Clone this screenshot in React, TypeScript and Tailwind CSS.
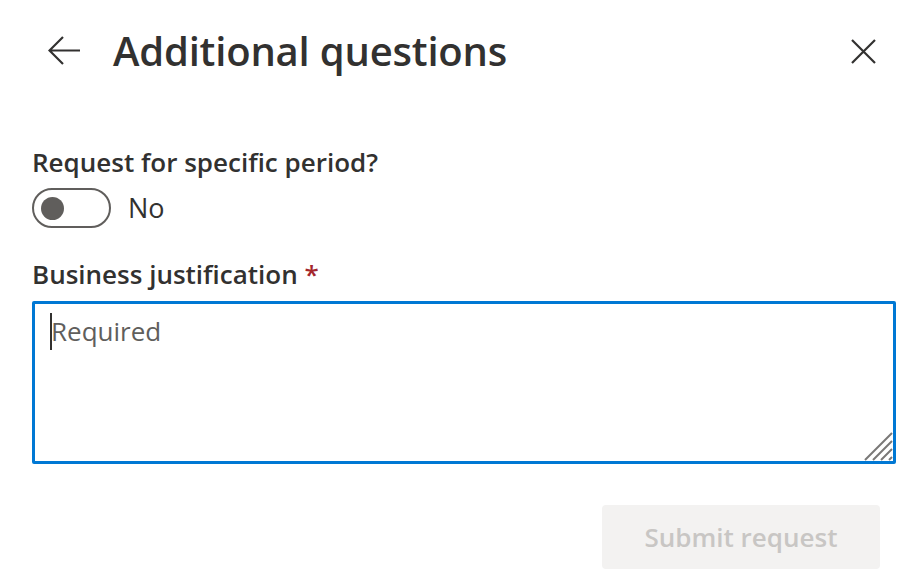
import React from "react";

export default function App() {
  return (
    <div className="relative w-[913px] h-[585px] bg-white text-[#323130] font-['Open_Sans',_sans-serif] overflow-hidden">
      {/* Header */}
      <div className="flex items-center h-[102px] pl-[48px] pr-[37px]">
        <svg width="33" height="32" viewBox="0 0 33 32" className="shrink-0">
          <path d="M32 15.5H1.5M15 2L1.5 15.5L15 29" fill="none" stroke="#323130" strokeWidth="2.2" />
        </svg>
        <h1 className="ml-[32px] text-[40px] leading-[52px] font-semibold tracking-[-0.2px] flex-1">Additional questions</h1>
        <svg width="25" height="25" viewBox="0 0 25 25" className="shrink-0">
          <path d="M1 1L24 24M24 1L1 24" fill="none" stroke="#323130" strokeWidth="2.2" />
        </svg>
      </div>

      <div className="pl-[32px] pr-[17px] pt-[43px]">
        <div className="text-[26px] leading-[34px] font-semibold">Request for specific period?</div>
        <div className="flex items-center mt-[9px]">
          <div className="w-[79px] h-[40px] rounded-full border-2 border-[#605e5c] flex items-center pl-[7px]">
            <div className="w-[23px] h-[23px] rounded-full bg-[#605e5c]"></div>
          </div>
          <span className="ml-[17px] text-[27px] leading-[40px]">No</span>
        </div>

        <div className="mt-[29px] text-[26px] leading-[34px] font-semibold">
          Business justification <span className="text-[#a4262c]">*</span>
        </div>
        <div className="relative mt-[10px] h-[163px] border-[3px] border-[#0078d4] rounded-[2px] pl-[16px] pt-[10px]">
          <span className="absolute left-[15px] top-[9px] w-[2px] h-[37px] bg-[#323130]"></span>
          <span className="text-[26px] leading-[34px] text-[#605e5c]">Required</span>
          <svg width="30" height="30" viewBox="0 0 30 30" className="absolute right-0 bottom-0">
            <path d="M29 2L2 29M29 10L10 29M29 18L18 29M29 26L26 29" fill="none" stroke="#7a7877" strokeWidth="2" />
          </svg>
        </div>

        <div className="flex justify-end pr-[16px] mt-[41px]">
          <button className="w-[278px] h-[64px] rounded-[4px] bg-[#f3f2f1] text-[#c8c6c4] text-[26px] font-semibold">
            Submit request
          </button>
        </div>
      </div>
    </div>
  );
}
